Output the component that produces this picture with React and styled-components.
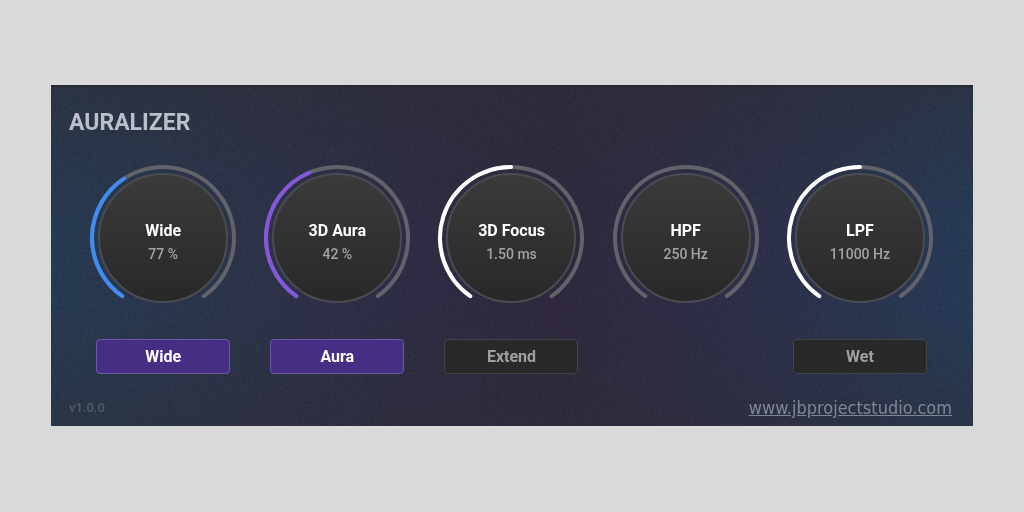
import React from 'react';
import styled, {createGlobalStyle} from 'styled-components';

const knobs = [
	{id: 'wide', label: 'Wide', min: 0, max: 200, step: 1, start: 77, color: '#3f8cf3', format: v => `${v} %`, toggle: 'Wide', on: true},
	{id: 'aura', label: '3D Aura', min: 0, max: 100, step: 1, start: 42, color: '#8457dc', format: v => `${v} %`, toggle: 'Aura', on: true},
	{id: 'focus', label: '3D Focus', min: 0, max: 3, step: 0.01, start: 1.5, color: '#ffffff', format: v => `${v.toFixed(2)} ms`, toggle: 'Extend', on: false},
	{id: 'hpf', label: 'HPF', min: 250, max: 2000, step: 1, start: 250, color: '#ffffff', format: v => `${v} Hz`},
	{id: 'lpf', label: 'LPF', min: 2000, max: 20000, step: 10, start: 11000, color: '#ffffff', format: v => `${v} Hz`, toggle: 'Wet', on: false},
];

// the dial runs clockwise from -145 to 145 degrees, 0 is straight up
const SWEEP = 145;
const RADIUS = 71;

const point = deg => {
	const rad = deg * Math.PI / 180;
	return `${74 + RADIUS * Math.sin(rad)} ${74 - RADIUS * Math.cos(rad)}`;
};

const arc = (from, to) =>
	`M ${point(from)} A ${RADIUS} ${RADIUS} 0 ${to - from > 180 ? 1 : 0} 1 ${point(to)}`;

function Knob({id, label, min, max, step, start, color, format}) {
	const [value, setValue] = React.useState(start);
	const angle = -SWEEP + (value - min) / (max - min) * SWEEP * 2;

	return (
		<KnobWrapper>
			<Dial viewBox="0 0 148 148" aria-hidden="true">
				<defs>
					<linearGradient id={`face-${id}`} x1="0" y1="0" x2="0" y2="1">
						<stop offset="0" stopColor="#3b3b3b"/>
						<stop offset="1" stopColor="#282828"/>
					</linearGradient>
				</defs>
				<circle cx="74" cy="74" r="64" fill={`url(#face-${id})`} stroke="#4b4c53" strokeWidth="2"/>
				<path className="arc" d={arc(-SWEEP, SWEEP)} stroke="#62636a"/>
				{value > min && <path className="arc" d={arc(-SWEEP, angle)} stroke={color}/>}
			</Dial>
			<KnobText>
				<label htmlFor={id}>{label}</label>
				<output htmlFor={id}>{format(value)}</output>
			</KnobText>
			<KnobInput
				id={id}
				type="range"
				min={min}
				max={max}
				step={step}
				value={value}
				onChange={e => setValue(Number(e.target.value))}
			/>
		</KnobWrapper>
	)
}

function Toggle({label, on}) {
	const [active, setActive] = React.useState(on);
	return (
		<ToggleButton type="button" $active={active} aria-pressed={active} onClick={() => setActive(!active)}>
			{label}
		</ToggleButton>
	)
}

export default function App() {
	return (
		<>
			<GlobalStyle/>
			<Page>
				<Panel>
					<Grain aria-hidden="true">
						<filter id="grain">
							<feTurbulence type="fractalNoise" baseFrequency="0.35" numOctaves="2" seed="4"/>
							<feColorMatrix type="matrix" values="1 0 0 0 0  1 0 0 0 0  1 0 0 0 0  0 0 0 0 1"/>
						</filter>
						<rect width="100%" height="100%" filter="url(#grain)"/>
					</Grain>
					<Title>AURALIZER</Title>
					<Channels>
						{knobs.map(knob => (
							<Channel key={knob.id}>
								<Knob {...knob}/>
								{knob.toggle && <Toggle label={knob.toggle} on={knob.on}/>}
							</Channel>
						))}
					</Channels>
					<Footer>
						<Version>v1.0.0</Version>
						<SiteLink href="https://www.jbprojectstudio.com">www.jbprojectstudio.com</SiteLink>
					</Footer>
				</Panel>
			</Page>
		</>
	)
}

const GlobalStyle = createGlobalStyle`
	* {
		box-sizing: border-box;
	}
	body {
		margin: 0;
		background: #d9d9d9;
		font-family: Roboto, "Liberation Sans", sans-serif;
	}
`

const Page = styled.main`
	min-height: 100vh;
	padding: 85px 51px;
`

const Panel = styled.section`
	position: relative;
	isolation: isolate;
	padding: 20px 19px 6px 18px;
	border-top: 2px solid #25282c;
	background:
		linear-gradient(180deg, rgba(42, 42, 48, 0.5) 0%, rgba(42, 42, 48, 0) 40%, rgba(42, 42, 48, 0) 65%, rgba(42, 42, 48, 0.4) 100%),
		linear-gradient(90deg, #23354a 0%, #282f44 20%, #2a273c 43%, #2b2538 55%, #282c43 78%, #23354e 100%);
`

const Grain = styled.svg`
	position: absolute;
	inset: 0;
	z-index: -1;
	width: 100%;
	height: 100%;
	opacity: 0.18;
	mix-blend-mode: overlay;
`

const Title = styled.h1`
	margin: 0;
	font-size: 23px;
	line-height: 32px;
	font-weight: 700;
	color: #bbbfca;
`

const Channels = styled.div`
	display: grid;
	grid-template-columns: repeat(5, 1fr);
	margin: 25px 7px 0;
`

const Channel = styled.div`
	display: flex;
	flex-direction: column;
	align-items: center;
	gap: 27px;
`

const KnobWrapper = styled.div`
	display: grid;
	width: 148px;
	height: 148px;
	> * {
		grid-area: 1 / 1;
	}
`

const Dial = styled.svg`
	width: 100%;
	height: 100%;
	.arc {
		fill: none;
		stroke-width: 4;
		stroke-linecap: round;
	}
`

const KnobText = styled.div`
	display: flex;
	flex-direction: column;
	align-items: center;
	justify-content: center;
	padding-top: 8px;
	label {
		font-size: 16px;
		line-height: 24px;
		font-weight: 700;
		color: #ffffff;
	}
	output {
		font-size: 14px;
		line-height: 22px;
		font-weight: 500;
		color: #a3a3a3;
	}
`

const KnobInput = styled.input`
	width: 100%;
	height: 100%;
	margin: 0;
	opacity: 0;
	cursor: pointer;
`

const ToggleButton = styled.button`
	width: 134px;
	height: 35px;
	padding: 0;
	border: 1px solid ${({$active}) => $active ? '#6c58a8' : '#424249'};
	border-radius: 4px;
	background: ${({$active}) => $active ? '#452e84' : '#292929'};
	color: ${({$active}) => $active ? '#ffffff' : '#a0a0a0'};
	font-family: inherit;
	font-size: 16px;
	font-weight: 700;
	cursor: pointer;
`

const Footer = styled.footer`
	display: flex;
	align-items: center;
	justify-content: space-between;
	margin-top: 22px;
	padding-right: 2px;
`

const Version = styled.span`
	font-size: 13px;
	line-height: 24px;
	font-weight: 500;
	color: #555b64;
`

const SiteLink = styled.a`
	font-family: "DejaVu Sans Condensed", "DejaVu Sans", sans-serif;
	font-size: 18px;
	line-height: 24px;
	color: #7f8794;
`
